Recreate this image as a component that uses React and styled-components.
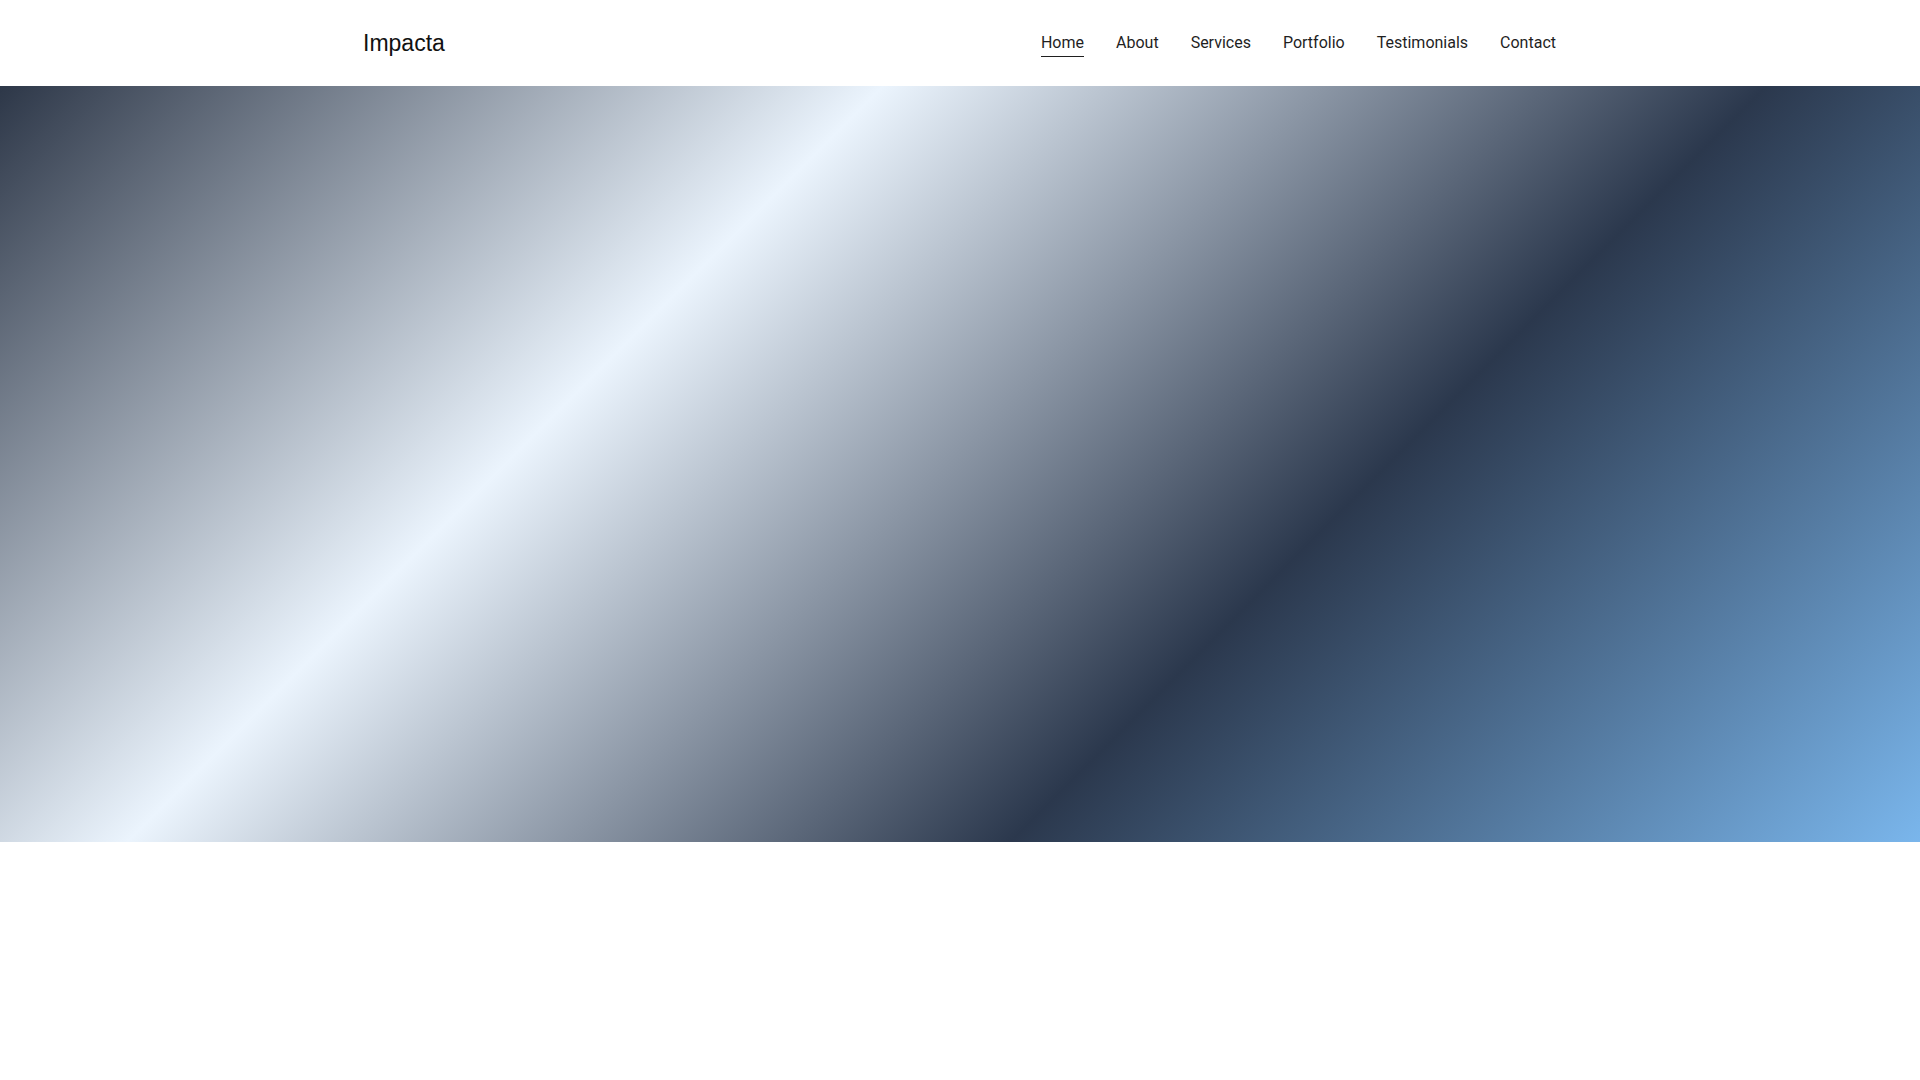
import React from 'react';
import styled, { createGlobalStyle } from 'styled-components';

const GlobalStyle = createGlobalStyle`
* {
    margin: 0;
    padding: 0;
    box-sizing: border-box;
}

body {
    font-family: Roboto, 'Noto Sans', sans-serif;
    background: #fff;
    color: #1a1a1a;
}
`;

const Header = styled.header`
    background: #fff;
    height: 86px;
`;

const HeaderInner = styled.div`
    max-width: 1200px;
    height: 100%;
    margin: 0 auto;
    display: flex;
    align-items: center;
    justify-content: space-between;
`;

const Logo = styled.a`
    font-family: 'Liberation Sans', Arial, sans-serif;
    font-size: 23px;
    color: #111;
    text-decoration: none;
    margin-left: 3px;
`;

const Nav = styled.nav`
    display: flex;
    gap: 32px;
    margin-top: -2px;
    margin-right: 4px;
`;

const NavLink = styled.a`
    position: relative;
    font-size: 16px;
    color: #1f1f1f;
    text-decoration: none;

    &::after {
        content: '';
        position: absolute;
        left: 0;
        right: 0;
        bottom: -5px;
        height: 1px;
        background: #1f1f1f;
        display: ${(p) => (p.$active ? 'block' : 'none')};
    }
`;

const Hero = styled.section`
    height: 70vh;
    background: linear-gradient(
        135deg,
        #2d3748 0%,
        #ebf4fd 33%,
        #2b384d 66%,
        #7ab6ec 100%
    );
`;

const links = ['Home', 'About', 'Services', 'Portfolio', 'Testimonials', 'Contact'];

const App = () => {
    return (
        <>
            <GlobalStyle />
            <Header>
                <HeaderInner>
                    <Logo href="#">Impacta</Logo>
                    <Nav>
                        {links.map((l, i) => (
                            <NavLink key={l} href="#" $active={i === 0}>
                                {l}
                            </NavLink>
                        ))}
                    </Nav>
                </HeaderInner>
            </Header>
            <Hero />
        </>
    );
};

export default App;
